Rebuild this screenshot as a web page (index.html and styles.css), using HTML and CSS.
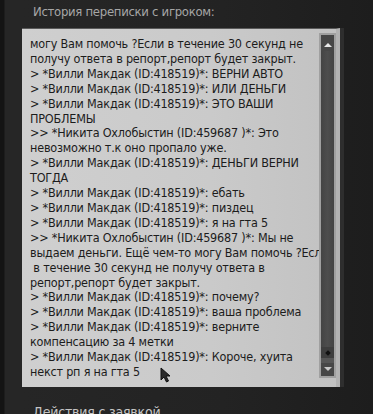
FILE: index.html
```html
<!DOCTYPE html>
<html lang="ru">
<head>
<meta charset="utf-8">
<link rel="stylesheet" href="styles.css">
</head>
<body>
<div class="page">
  <div class="title">История переписки с игроком:</div>
  <div class="box">
    <div class="log">
      <div>могу Вам помочь ?Если в течение 30 секунд не</div>
      <div>получу ответа в репорт,репорт будет закрыт.</div>
      <div>&gt; *Вилли Макдак (ID:418519)*: ВЕРНИ АВТО</div>
      <div>&gt; *Вилли Макдак (ID:418519)*: ИЛИ ДЕНЬГИ</div>
      <div>&gt; *Вилли Макдак (ID:418519)*: ЭТО ВАШИ</div>
      <div>ПРОБЛЕМЫ</div>
      <div>&gt;&gt; *Никита Охлобыстин (ID:459687 )*: Это</div>
      <div>невозможно т.к оно пропало уже.</div>
      <div>&gt; *Вилли Макдак (ID:418519)*: ДЕНЬГИ ВЕРНИ</div>
      <div>ТОГДА</div>
      <div>&gt; *Вилли Макдак (ID:418519)*: ебать</div>
      <div>&gt; *Вилли Макдак (ID:418519)*: пиздец</div>
      <div>&gt; *Вилли Макдак (ID:418519)*: я на гта 5</div>
      <div>&gt;&gt; *Никита Охлобыстин (ID:459687 )*: Мы не</div>
      <div>выдаем деньги. Ещё чем-то могу Вам помочь ?Если</div>
      <div>&nbsp;в течение 30 секунд не получу ответа в</div>
      <div>репорт,репорт будет закрыт.</div>
      <div>&gt; *Вилли Макдак (ID:418519)*: почему?</div>
      <div>&gt; *Вилли Макдак (ID:418519)*: ваша проблема</div>
      <div>&gt; *Вилли Макдак (ID:418519)*: верните</div>
      <div>компенсацию за 4 метки</div>
      <div>&gt; *Вилли Макдак (ID:418519)*: Короче, хуита</div>
      <div>некст рп я на гта 5</div>
    </div>
    <div class="scrollbar">
      <div class="arrow up"></div>
      <div class="track"></div>
      <div class="thumb"><span class="dot"></span></div>
      <div class="gap"></div>
      <div class="arrow down"></div>
    </div>
    <svg class="cursor" width="12" height="16" viewBox="0 0 12 16">
      <path d="M1 1 L1 13 L4 10 L6.5 15 L8.5 14 L6 9 L10 9 Z" fill="#2a2a2a" stroke="#111" stroke-width="1"/>
    </svg>
  </div>
  <div class="footer">Действия с заявкой</div>
</div>
</body>
</html>
```

FILE: styles.css
```css
html, body {
  margin: 0;
  padding: 0;
}
body {
  width: 373px;
  height: 414px;
  overflow: hidden;
  background: #1f1f1f;
  font-family: "DejaVu Sans Condensed", "DejaVu Sans", sans-serif;
}
.page {
  height: 414px;
  padding-left: 22px;
  box-sizing: border-box;
  background: linear-gradient(to right, #141414 0, #141414 4px, #262626 5px, #262626 22px, #232323 60%, #1d1d1d 100%);
}
.title {
  height: 28px;
  padding-left: 11px;
  padding-top: 4px;
  box-sizing: border-box;
  color: #a6a6a6;
  font-size: 13px;
  letter-spacing: -0.3px;
  line-height: 16px;
}
.box {
  position: relative;
  width: 318px;
  height: 359px;
  box-sizing: border-box;
  background: linear-gradient(to right, #cfcfcf, #cacaca 60%, #c2c2c2);
  border-top: 1px solid #5a5a5a;
  border-right: 4px solid #b3b3b3;
  box-shadow: 4px 0 0 #2e2e2e;
  display: flex;
  align-items: flex-start;
}
.log {
  flex: 1;
  padding: 8px 0 0 8px;
  color: #1c1c1c;
  font-size: 12.5px;
  letter-spacing: -0.2px;
  line-height: 14.9px;
  white-space: nowrap;
  overflow: hidden;
}
.scrollbar {
  width: 17px;
  height: 345px;
  margin-top: 4px;
  box-sizing: border-box;
  border: 2px solid #a0a0a0;
  background: #474747;
  display: flex;
  flex-direction: column;
}
.arrow {
  height: 12px;
  display: flex;
  justify-content: center;
  align-items: center;
}
.arrow.up {
  margin-top: 4px;
}
.arrow::after {
  content: "";
  border-left: 4px solid transparent;
  border-right: 4px solid transparent;
}
.arrow.up::after {
  border-bottom: 4px solid #e8e8e8;
}
.arrow.down::after {
  border-top: 4px solid #c8c8c8;
}
.arrow.down {
  margin-bottom: 1px;
}
.track {
  flex: 1;
  background: linear-gradient(to right, #444, #4d4d4d, #444);
}
.thumb {
  height: 11px;
  background: #3e3e3e;
  display: flex;
  justify-content: center;
  align-items: center;
}
.dot {
  width: 4px;
  height: 4px;
  background: #111;
  transform: rotate(45deg);
}
.gap {
  height: 5px;
  background: #565656;
}
.cursor {
  position: absolute;
  left: 138px;
  top: 338px;
}
.footer {
  padding-left: 11px;
  padding-top: 17px;
  color: #c4c4c4;
  font-size: 14px;
  letter-spacing: -0.2px;
  line-height: 16px;
}
```
